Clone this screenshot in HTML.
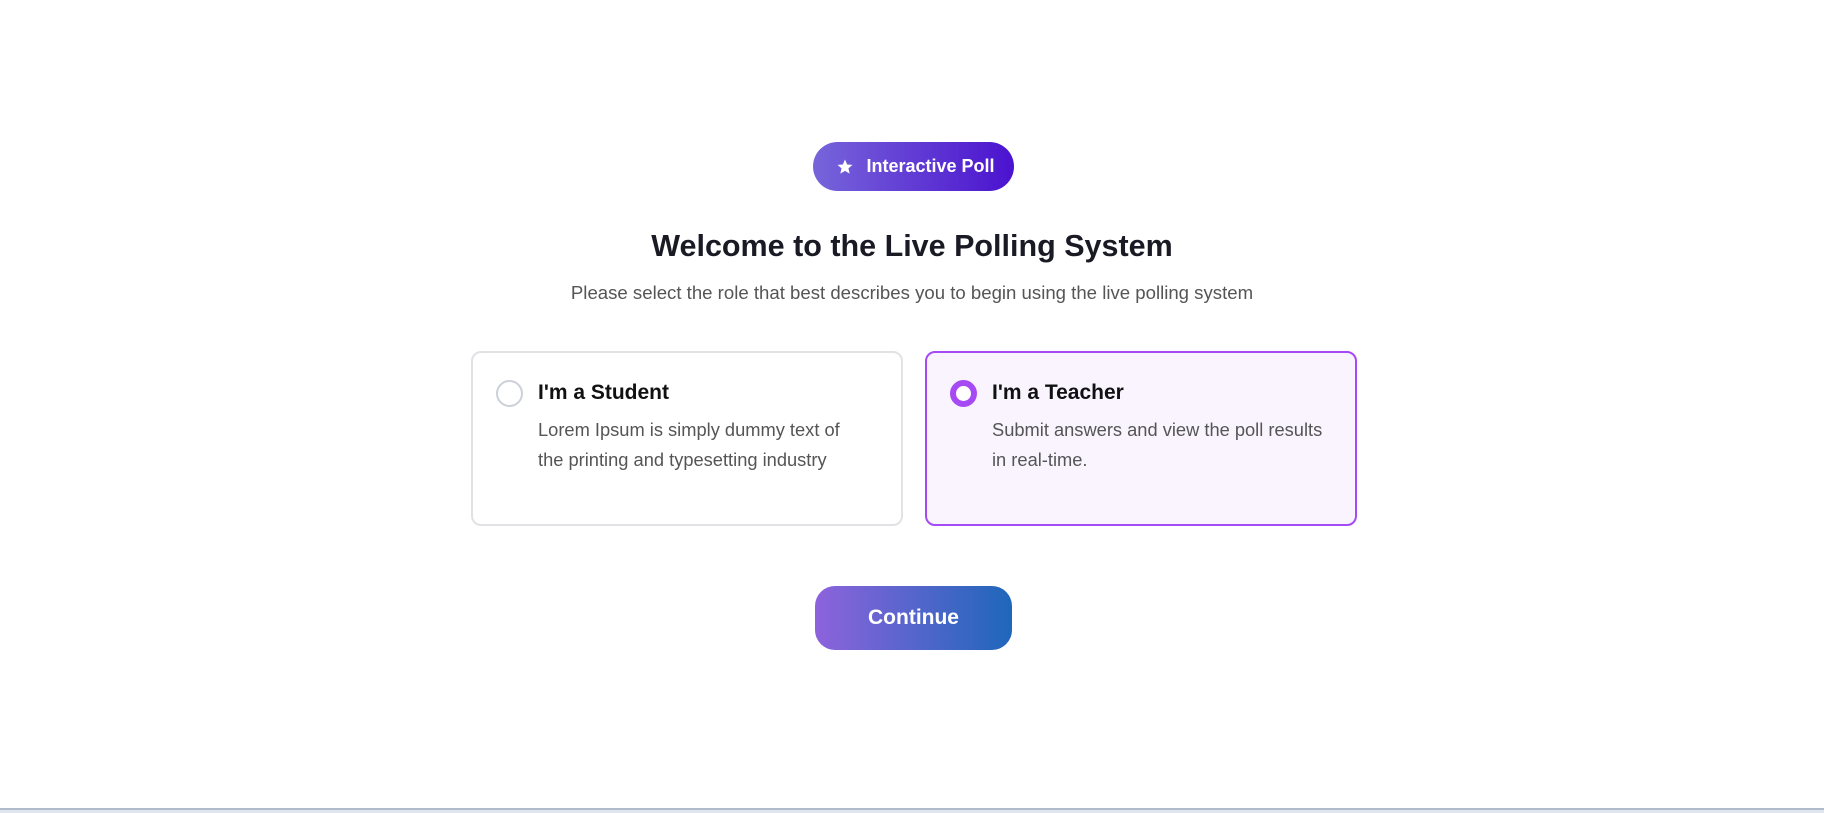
<!DOCTYPE html>
<html><head><meta charset="utf-8"><style>
*{margin:0;padding:0;box-sizing:border-box}
body{width:1824px;height:813px;background:#fff;font-family:"Liberation Sans",sans-serif;position:relative;overflow:hidden}
.badge{position:absolute;left:813px;top:142px;width:201px;height:49px;border-radius:25px;background:linear-gradient(90deg,#7765da,#4b12cf);color:#fff;font-weight:bold;font-size:18px;display:flex;align-items:center;justify-content:center;gap:12px;padding-left:4px}
h1{position:absolute;left:0;width:1824px;top:229px;text-align:center;font-size:30.5px;font-weight:bold;color:#1a1a24}
.sub{position:absolute;left:0;width:1824px;top:282px;text-align:center;font-size:18.6px;color:#555}
.card{position:absolute;top:351px;width:432px;height:175px;border:2px solid #e2e2e6;border-radius:10px;background:#fff}
.card.sel{border-color:#a64bf4;background:#faf4fe}
.radio{position:absolute;left:23px;top:27px;width:27px;height:27px;border-radius:50%;border:2px solid #ccd0d8}
.sel .radio{border:6px solid #a64bf4;background:#fff}
.t{position:absolute;left:65px;top:28px;font-size:21px;font-weight:bold;color:#111}
.d{position:absolute;left:65px;top:62px;font-size:18.3px;line-height:30px;color:#555;white-space:nowrap}
.btn{position:absolute;left:815px;top:586px;width:197px;height:64px;border-radius:20px;background:linear-gradient(90deg,#8d63dc,#1e67bb);color:#fff;font-weight:bold;font-size:21px;display:flex;align-items:center;justify-content:center}
.bar{position:absolute;left:0;top:808px;width:1824px;height:5px;background:#dfe6ee;border-top:2px solid #b1bccb}
</style></head><body>
<div class="badge"><svg width="18" height="18" viewBox="0 0 24 24"><path fill="#fff" d="M12 2l2.9 6.6 7.1.6-5.4 4.7 1.6 7-6.2-3.8-6.2 3.8 1.6-7L2 9.2l7.1-.6z"/></svg>Interactive Poll</div>
<h1>Welcome to the Live Polling System</h1>
<div class="sub">Please select the role that best describes you to begin using the live polling system</div>
<div class="card" style="left:471px"><div class="radio"></div><div class="t">I'm a Student</div><div class="d">Lorem Ipsum is simply dummy text of<br>the printing and typesetting industry</div></div>
<div class="card sel" style="left:925px"><div class="radio"></div><div class="t">I'm a Teacher</div><div class="d">Submit answers and view the poll results<br>in real-time.</div></div>
<div class="btn">Continue</div>
<div class="bar"></div>
</body></html>
